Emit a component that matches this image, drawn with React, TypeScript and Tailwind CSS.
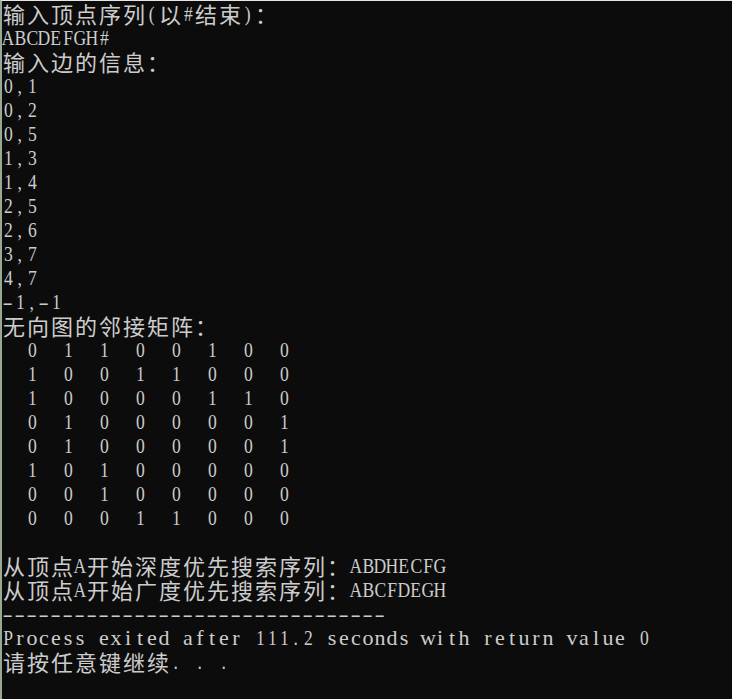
import React from 'react';

const matrix = [
  [0, 1, 1, 0, 0, 1, 0, 0],
  [1, 0, 0, 1, 1, 0, 0, 0],
  [1, 0, 0, 0, 0, 1, 1, 0],
  [0, 1, 0, 0, 0, 0, 0, 1],
  [0, 1, 0, 0, 0, 0, 0, 1],
  [1, 0, 1, 0, 0, 0, 0, 0],
  [0, 0, 1, 0, 0, 0, 0, 0],
  [0, 0, 0, 1, 1, 0, 0, 0],
];

const lines: string[] = [
  '输入顶点序列(以#结束)：',
  'ABCDEFGH#',
  '输入边的信息：',
  '0,1',
  '0,2',
  '0,5',
  '1,3',
  '1,4',
  '2,5',
  '2,6',
  '3,7',
  '4,7',
  '-1,-1',
  '无向图的邻接矩阵：',
  ...matrix.map(row => row.map(v => `  ${v}`).join('')),
  '',
  '从顶点A开始深度优先搜索序列：ABDHECFG',
  '从顶点A开始广度优先搜索序列：ABCFDEGH',
  '-'.repeat(32),
  'Process exited after 111.2 seconds with return value 0',
  '请按任意键继续. . .',
];

// console grid: ascii = 1 cell (12px), CJK = 2 cells (24px)
const isWide = (ch: string) => ch.charCodeAt(0) > 0x2e80;

// squeeze the wide serif caps/digits into a 12px cell, stretch the hyphen
const glyphFit = (ch: string) => {
  if (ch === '-') return 'scale-x-[1.4]';
  if (/[a-z]/.test(ch)) return '';
  return 'scale-x-[0.8]';
};

const ConsoleLine: React.FC<{ text: string }> = ({ text }) => (
  <div className="flex h-[24px]">
    {[...text].map((ch, i) =>
      isWide(ch) ? (
        <span
          key={i}
          className="flex h-[24px] w-[24px] shrink-0 justify-center font-['Noto_Sans_CJK_SC',sans-serif] text-[22px] leading-[23px]"
        >
          {ch}
        </span>
      ) : (
        <span
          key={i}
          className="flex h-[24px] w-[12px] shrink-0 justify-center font-['Liberation_Serif',serif] text-[22px] leading-[24px]"
        >
          <span className={`inline-block ${glyphFit(ch)}`}>{ch === ' ' ? '\u00a0' : ch}</span>
        </span>
      )
    )}
  </div>
);

const App: React.FC = () => {
  return (
    <div className="h-[699px] w-[732px] overflow-hidden border-t border-l-2 border-t-[#e6e6e6] border-l-[#9aa892] bg-[#0c0c0c] pt-px text-[#cccccc]">
      {lines.map((line, i) => (
        <ConsoleLine key={i} text={line} />
      ))}
    </div>
  );
};

export default App;
